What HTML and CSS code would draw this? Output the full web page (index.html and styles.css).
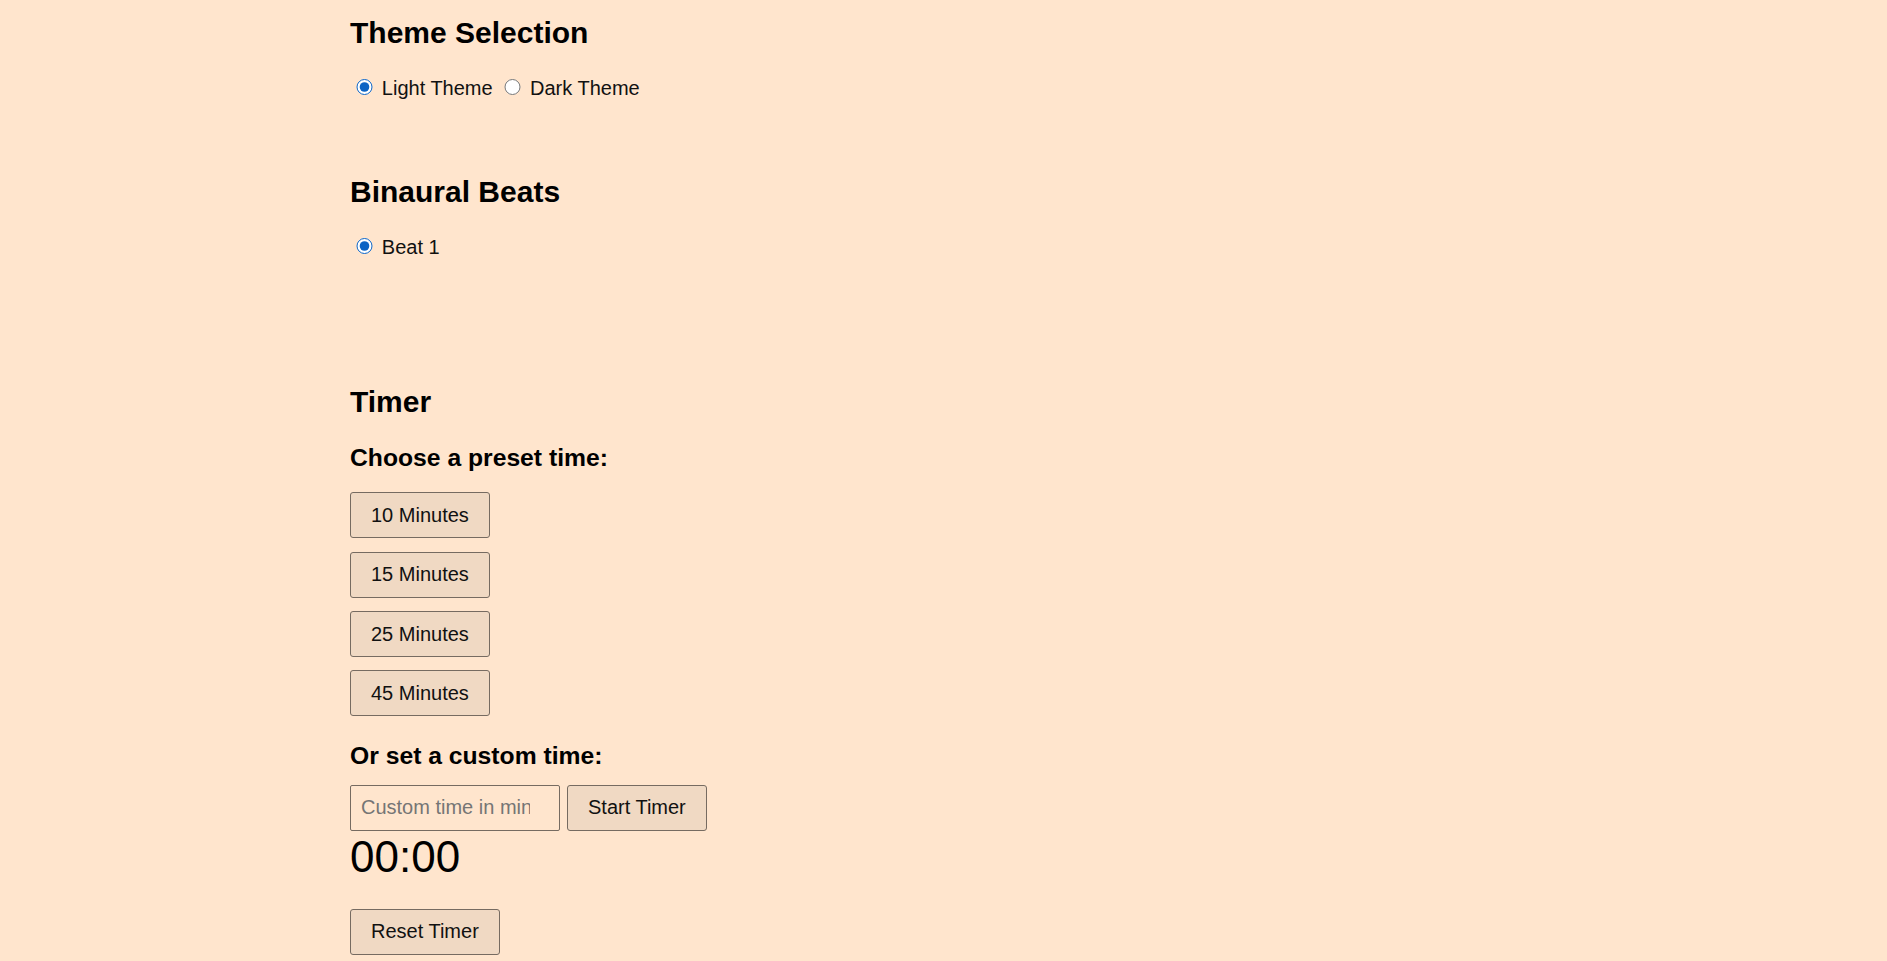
FILE: index.html
```html
<!DOCTYPE html>
<html lang="en">
<head>
<meta charset="utf-8">
<title>Meditation Timer</title>
<link rel="stylesheet" href="styles.css">
</head>
<body>
<main class="page">
  <section class="section theme">
    <h2 class="section-title">Theme Selection</h2>
    <div class="radio-row">
      <input class="radio" type="radio" id="light" name="theme" checked> <label for="light">Light Theme</label>
      <input class="radio" type="radio" id="dark" name="theme"> <label for="dark">Dark Theme</label>
    </div>
  </section>

  <section class="section beats">
    <h2 class="section-title">Binaural Beats</h2>
    <div class="radio-row">
      <input class="radio" type="radio" id="beat1" name="beat" checked> <label for="beat1">Beat 1</label>
    </div>
  </section>

  <section class="section timer">
    <h2 class="section-title">Timer</h2>
    <h3 class="sub-title">Choose a preset time:</h3>
    <div class="presets">
      <button class="btn">10 Minutes</button>
      <button class="btn">15 Minutes</button>
      <button class="btn">25 Minutes</button>
      <button class="btn">45 Minutes</button>
    </div>
    <h3 class="sub-title custom-title">Or set a custom time:</h3>
    <div class="custom-row">
      <input class="time-input" type="text" placeholder="Custom time in minutes">
      <button class="btn">Start Timer</button>
    </div>
    <div class="timer-display">00:00</div>
    <button class="btn reset">Reset Timer</button>
  </section>
</main>
</body>
</html>
```

FILE: styles.css
```css
html, body {
  margin: 0;
  padding: 0;
}

body {
  background: #ffe5cd;
  font-family: "Liberation Sans", Arial, sans-serif;
  font-size: 20px;
  color: #000;
}

.page {
  padding: 15.65px 0 0 350px;
}

.section-title {
  font-size: 30px;
  font-weight: bold;
  line-height: normal;
  margin: 0;
}

.radio-row {
  margin-top: 25.4px;
  color: #111;
}

.radio {
  width: 16.25px;
  height: 16.25px;
  margin: 3.75px 3.75px 0 6.25px;
  vertical-align: baseline;
  accent-color: #0b63c4;
}

.beats {
  margin-top: 74.8px;
}

.beats .radio-row {
  margin-top: 25.2px;
}

.timer {
  margin-top: 125.6px;
}

.sub-title {
  font-size: 24.7px;
  font-weight: bold;
  line-height: normal;
  margin: 25.1px 0 0;
}

.custom-title {
  margin-top: 25.4px;
}

.presets {
  display: flex;
  flex-direction: column;
  align-items: flex-start;
  gap: 13.33px;
  margin-top: 20.7px;
}

.btn {
  font-family: inherit;
  font-size: 20px;
  line-height: 23px;
  padding: 10.5px 20px;
  border: 1px solid #766b61;
  border-radius: 3px;
  background: #f0d9c3;
  color: #111;
  cursor: pointer;
}

.custom-row {
  display: flex;
  align-items: flex-start;
  gap: 6.6px;
  margin-top: 14.8px;
}

.time-input {
  box-sizing: border-box;
  width: 210.4px;
  height: 46px;
  padding: 0 29.7px 0 10px;
  font-family: inherit;
  font-size: 20px;
  border: 1px solid #766b61;
  border-radius: 2px;
  background: transparent;
  color: #111;
}

.time-input::placeholder {
  color: #757575;
}

.timer-display {
  font-size: 44px;
  line-height: normal;
  margin-top: 1.6px;
}

.reset {
  display: block;
  margin-top: 26.6px;
}
```
